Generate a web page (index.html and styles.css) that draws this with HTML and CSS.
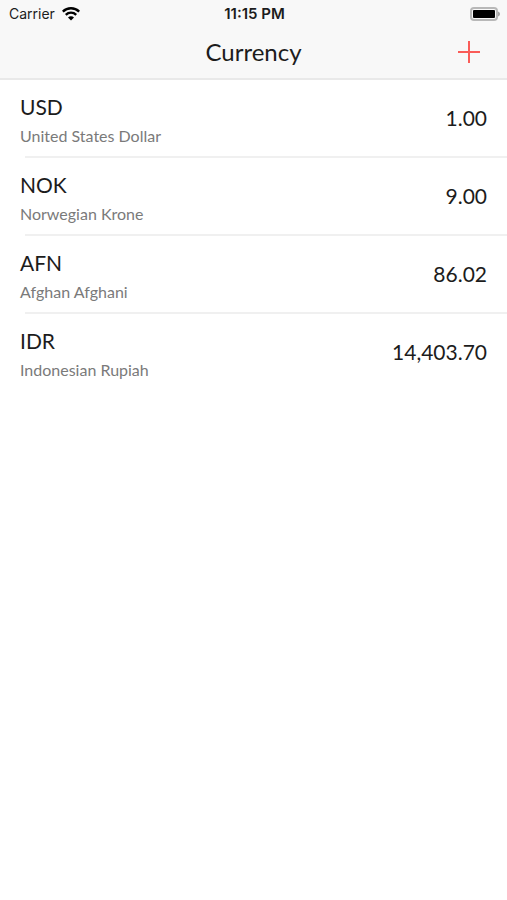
FILE: index.html
```html
<!DOCTYPE html>
<html lang="en">
<head>
  <meta charset="UTF-8" />
  <meta name="viewport" content="width=device-width, initial-scale=1.0"/>
  <title>Currency</title>
  <link rel="stylesheet" href="styles.css">
</head>
<body>
  <header class="top">
    <div class="status-bar">
      <div class="carrier">
        <span>Carrier</span>
        <svg class="wifi" viewBox="0 0 18 14" width="18" height="14" aria-hidden="true">
          <path d="M.8 4.6a11.6 11.6 0 0 1 16.4 0" />
          <path d="M3.8 7.8a7.4 7.4 0 0 1 10.4 0" />
          <path class="dot" d="M9 13.4 6 10.4a4.2 4.2 0 0 1 6 0z" />
        </svg>
      </div>
      <div class="time">11:15 PM</div>
      <div class="battery">
        <svg viewBox="0 0 30 14" width="30" height="14" aria-hidden="true">
          <rect class="shell" x="1" y="1" width="26" height="12" rx="3" />
          <rect class="charge" x="3" y="3" width="22" height="8" rx="1" />
          <path class="tip" d="M28 4.500c1.300.4 2 1.300 2 2.500s-.7 2.100-2 2.500z" />
        </svg>
      </div>
    </div>
    <div class="nav-bar">
      <h1>Currency</h1>
      <button class="add" type="button" aria-label="Add currency">
        <svg viewBox="0 0 22 22" width="22" height="22" aria-hidden="true">
          <path d="M11 0v22M0 11h22" />
        </svg>
      </button>
    </div>
  </header>

  <ul class="currencies">
    <li class="currency">
      <div class="label">
        <div class="code">USD</div>
        <div class="name">United States Dollar</div>
      </div>
      <div class="rate">1.00</div>
    </li>
    <li class="currency">
      <div class="label">
        <div class="code">NOK</div>
        <div class="name">Norwegian Krone</div>
      </div>
      <div class="rate">9.00</div>
    </li>
    <li class="currency">
      <div class="label">
        <div class="code">AFN</div>
        <div class="name">Afghan Afghani</div>
      </div>
      <div class="rate">86.02</div>
    </li>
    <li class="currency">
      <div class="label">
        <div class="code">IDR</div>
        <div class="name">Indonesian Rupiah</div>
      </div>
      <div class="rate">14,403.70</div>
    </li>
  </ul>
</body>
</html>
```
FILE: styles.css
```css
body {
  margin: 0;
  font-family: Lato, "Noto Sans", sans-serif;
  color: #1c1c1c;
  background-color: #fff;
}
.top {
  background-color: #f8f8f8;
  border-bottom: 2px solid #e9e9e9;
}
.status-bar {
  display: grid;
  grid-template-columns: 1fr auto 1fr;
  align-items: center;
  height: 27px;
  padding: 0 7px 0 9px;
  font-family: Inter, sans-serif;
  font-size: 14px;
}
.carrier {
  display: flex;
  align-items: center;
  gap: 7px;
}
.wifi path {
  fill: none;
  stroke: #000;
  stroke-width: 2.4;
}
.wifi .dot {
  fill: #000;
  stroke: none;
}
.time {
  font-size: 15px;
  font-weight: 600;
}
.battery {
  display: flex;
  justify-content: flex-end;
}
.shell {
  fill: #f8f8f8;
  stroke: #b8b8b8;
  stroke-width: 2;
}
.charge {
  fill: #000;
}
.tip {
  fill: #a5a5a5;
}
.nav-bar {
  display: grid;
  grid-template-columns: 1fr auto 1fr;
  align-items: center;
  height: 50px;
  padding: 0 27px 1px;
}
h1 {
  grid-column: 2;
  margin: 0;
  font-size: 24px;
  font-weight: 400;
  line-height: 50px;
}
.add {
  justify-self: end;
  display: flex;
  padding: 0;
  border: none;
  background: none;
  cursor: pointer;
}
.add path {
  stroke: #fa5c58;
  stroke-width: 2;
}
.currencies {
  margin: 0;
  padding: 0;
  list-style: none;
}
.currency {
  display: flex;
  justify-content: space-between;
  align-items: center;
  height: 76px;
  padding: 0 20px;
}
/* separator starts a little inside the text edge */
.currency:not(:last-child) {
  border-bottom: 2px solid;
  border-image: linear-gradient(to right, transparent 25px, #f0f0f0 25px) 0 0 2;
}
.label {
  padding-top: 4px;
}
.code,
.rate {
  font-size: 21px;
  line-height: 32px;
}
.name {
  font-size: 16px;
  line-height: 26px;
  color: #7a7a7a;
}
```
